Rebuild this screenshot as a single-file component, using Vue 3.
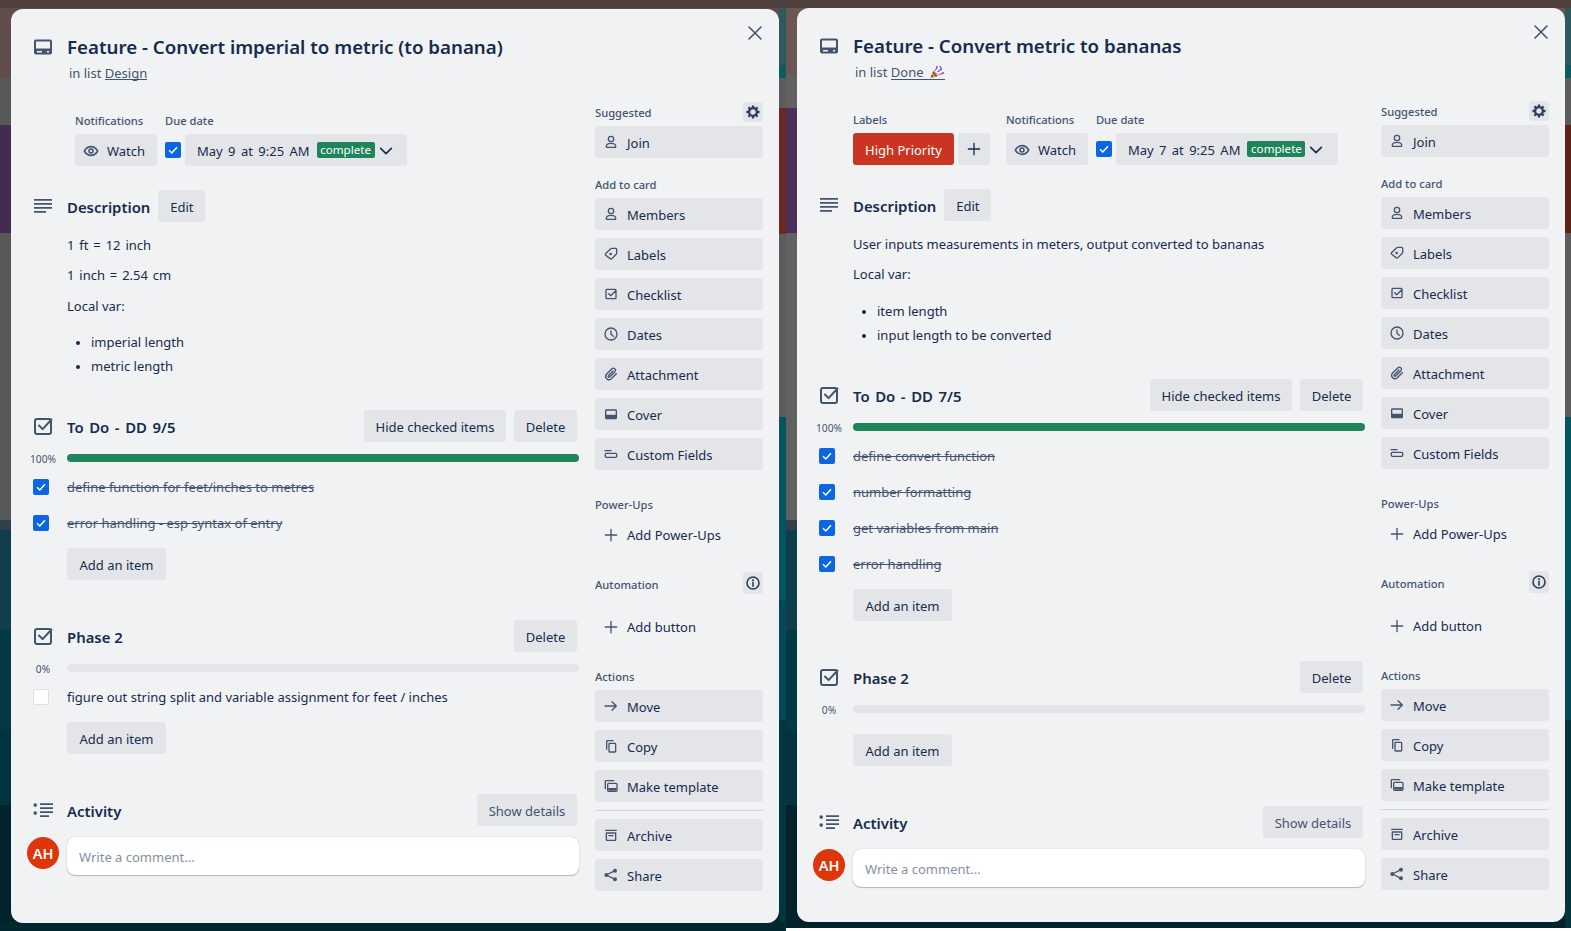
<template>
  <div class="page">
    <section v-for="card in cards" :key="card.title" class="modal" :class="card.cls">
      <button class="close"><Icon name="close" :size="16" /></button>
      <div class="main">
        <div class="row title-row">
          <div class="gutter"><Icon name="card" :size="24" class="head-icon" /></div>
          <h2 class="title">{{ card.title }}</h2>
        </div>
        <p class="in-list">
          in list
          <a class="list-link">{{ card.list }}<template v-if="card.party">&nbsp;<svg class="party" width="16" height="14" viewBox="0 0 16 14"><path d="M1 13.5 4.5 5l5.5 5.5Z" fill="#e8a820" /><path d="M2.5 10l1.5 2M4 7l3.5 4.5" stroke="#5a3fb0" stroke-width="1.3" /><circle cx="8" cy="2" r="1.1" fill="#e0389a" /><circle cx="12" cy="4" r="1.1" fill="#2f8fe0" /><circle cx="14" cy="8" r="1.1" fill="#e0389a" /><path d="M6 5.5 8 3M8.5 7l4-3M10 9.5l4-1M11 1l1 2" stroke="#7a48d0" stroke-width="1.1" fill="none" /></svg></template></a>
        </p>

        <div class="data">
          <div v-if="card.label" class="group">
            <h3 class="small-head">Labels</h3>
            <div class="group-line">
              <span class="label-chip">{{ card.label }}</span>
              <button class="btn square"><Icon name="plus" :size="16" /></button>
            </div>
          </div>
          <div class="group">
            <h3 class="small-head">Notifications</h3>
            <button class="btn watch"><Icon name="eye" :size="16" class="watch-icon" />Watch</button>
          </div>
          <div class="group due">
            <h3 class="small-head">Due date</h3>
            <div class="group-line">
              <span class="check on due-check"><Tick /></span>
              <button class="btn date">
                <span class="date-text">{{ card.due }}</span>
                <span class="complete">complete</span>
                <Icon name="chevron" :size="16" class="chev" />
              </button>
            </div>
          </div>
        </div>

        <div class="row desc-head">
          <div class="gutter"><Icon name="desc" :size="24" class="head-icon" /></div>
          <h3 class="section-title">Description</h3>
          <button class="btn edit">Edit</button>
        </div>
        <div class="desc">
          <p v-for="line in card.lines" :key="line" :class="{ sum: line.includes('=') }">{{ line }}</p>
          <ul>
            <li v-for="point in card.points" :key="point">{{ point }}</li>
          </ul>
        </div>

        <div v-for="(list, n) in card.checklists" :key="list.name" class="checklist" :class="{ lead: n === 0 }">
          <div class="row list-head">
            <div class="gutter"><Icon name="checklist" :size="24" class="head-icon" /></div>
            <h3 class="section-title grow">{{ list.name }}</h3>
            <button v-if="list.items.some(i => i.done)" class="btn hide">Hide checked items</button>
            <button class="btn delete">Delete</button>
          </div>
          <div class="row progress">
            <div class="gutter"><span class="pct">{{ progress(list) }}%</span></div>
            <div class="bar">
              <div class="bar-fill" :style="{ width: progress(list) + '%' }"></div>
            </div>
          </div>
          <div class="items">
            <div v-for="item in list.items" :key="item.text" class="row item">
              <div class="gutter">
                <span class="check item-check" :class="{ on: item.done }"><Tick v-if="item.done" /></span>
              </div>
              <span :class="{ struck: item.done }">{{ item.text }}</span>
            </div>
          </div>
          <button class="btn add-item">Add an item</button>
        </div>

        <div class="row activity-head">
          <div class="gutter"><Icon name="activity" :size="24" class="head-icon" /></div>
          <h3 class="section-title grow">Activity</h3>
          <button class="btn details">Show details</button>
        </div>
        <div class="row comment">
          <div class="gutter"><span class="avatar">AH</span></div>
          <div class="comment-box">Write a comment...</div>
        </div>
      </div>

      <aside class="side">
        <div v-for="sec in sections" :key="sec.title" class="side-sec" :class="sec.cls">
          <div class="side-head">
            <h3 class="small-head">{{ sec.title }}</h3>
            <button v-if="sec.tool" class="tool"><Icon :name="sec.tool" :size="16" /></button>
          </div>
          <div class="side-list">
            <template v-for="item in sec.items" :key="item.text">
              <hr v-if="item.rule" class="rule" />
              <button class="btn side-btn" :class="{ bare: sec.bare }">
                <Icon :name="item.icon" :size="16" class="side-icon" />{{ item.text }}
              </button>
            </template>
          </div>
        </div>
      </aside>
    </section>
  </div>
</template>

<script setup>
import { h } from 'vue'

const icons = {
  card: { fill: 'M5 4.5h14a2 2 0 0 1 2 2v11a2 2 0 0 1-2 2H5a2 2 0 0 1-2-2v-11a2 2 0 0 1 2-2Zm0 2v7h14v-7H5Zm1 9.500v1.600h5V16H6Zm10 0v1.600h2V16h-2Z' },
  desc: { fill: 'M3 5h18v1.800H3Zm0 4h18v1.800H3Zm0 4h18v1.800H3Zm0 4h12v1.800H3Z' },
  checklist: { line: 'M6 5h12a2 2 0 0 1 2 2v11a2 2 0 0 1-2 2H6a2 2 0 0 1-2-2V7a2 2 0 0 1 2-2Zm2 6.500 3.600 3.600L20.500 5.500' },
  activity: { fill: 'M4.200 5.300a1.800 1.800 0 1 1 0 3.600 1.800 1.800 0 0 1 0-3.600Zm0 8a1.800 1.800 0 1 1 0 3.600 1.800 1.800 0 0 1 0-3.600ZM9 5.200h13V7H9Zm0 4h13V11H9Zm0 4h13V15H9Zm0 4h9V19H9Z' },
  person: { line: 'M12 3.500a4 4 0 1 1 0 8 4 4 0 0 1 0-8ZM5 20v-1.500c0-2.500 2.500-4.500 7-4.500s7 2 7 4.500V20Z' },
  label: { line: 'M13 3.500h6a1.500 1.500 0 0 1 1.500 1.500v6a2 2 0 0 1-.6 1.400l-6.500 6.500a2 2 0 0 1-2.800 0L4.100 13.900a2 2 0 0 1 0-2.800l7.500-7a2 2 0 0 1 1.400-.6Z', fill: 'M11.500 10a2 2 0 1 1 0 4 2 2 0 0 1 0-4Z' },
  tick: { line: 'M6 5h12a1.500 1.500 0 0 1 1.500 1.500v11A1.500 1.500 0 0 1 18 19H6a1.500 1.500 0 0 1-1.500-1.500v-11A1.500 1.500 0 0 1 6 5Zm2.500 6.500 3 3L19 7' },
  clock: { line: 'M12 3a9 9 0 1 1 0 18 9 9 0 0 1 0-18Zm0 4.500V12.500l3.500 3' },
  clip: { line: 'M20 11.500l-8 8a5 5 0 0 1-7-7l8.500-8.500a3.200 3.200 0 0 1 4.500 4.500l-8 8a1.400 1.400 0 0 1-2-2l7-7' },
  cover: { fill: 'M5 5h14a2 2 0 0 1 2 2v11a2 2 0 0 1-2 2H5a2 2 0 0 1-2-2V7a2 2 0 0 1 2-2Zm0 2v6h14V7H5Z' },
  fields: { line: 'M3 7h9M5 11h14a1.500 1.500 0 0 1 1.500 1.500v3A1.500 1.500 0 0 1 19 17H5a1.500 1.500 0 0 1-1.500-1.500v-3A1.500 1.500 0 0 1 5 11Z' },
  plus: { line: 'M12 3.500v17M3.500 12h17' },
  arrow: { line: 'M3 12h17M13.500 5.500 20 12l-6.500 6.500' },
  copy: { line: 'M10 8h8a1 1 0 0 1 1 1v11a1 1 0 0 1-1 1h-8a1 1 0 0 1-1-1V9a1 1 0 0 1 1-1ZM5.500 17V5a1 1 0 0 1 1-1H15' },
  template: { line: 'M8.500 8h11a1.500 1.500 0 0 1 1.500 1.500v9a1.500 1.500 0 0 1-1.500 1.500h-11A1.500 1.500 0 0 1 7 18.500v-9A1.500 1.500 0 0 1 8.500 8ZM3.500 16V5a1 1 0 0 1 1-1H16', fill: 'M8 15h12v4H8Z' },
  archive: { line: 'M5 9h14v10a1 1 0 0 1-1 1H6a1 1 0 0 1-1-1ZM9 13h6M4 5h16' },
  share: { fill: 'M18 2.500a3 3 0 1 1 0 6 3 3 0 0 1 0-6ZM5 9a3 3 0 1 1 0 6 3 3 0 0 1 0-6Zm13 6.500a3 3 0 1 1 0 6 3 3 0 0 1 0-6Z', line: 'M18 5.500 5 12l13 6.500' },
  gear: { line: 'M12 6.200a5.800 5.800 0 1 1 0 11.600 5.800 5.800 0 0 1 0-11.600ZM12 2.200v3M12 18.800v3M2.200 12h3M18.800 12h3M5.100 5.100l2.100 2.100M16.800 16.800l2.100 2.100M5.100 18.900l2.100-2.100M16.800 7.200l2.100-2.100', width: 3.400, cap: 'butt' },
  info: { line: 'M12 3a9 9 0 1 1 0 18 9 9 0 0 1 0-18Zm0 8v6', fill: 'M10.700 6.500h2.600v2.600h-2.600Z', width: 2.400 },
  eye: { line: 'M2 12c2.500-4.500 6-6.500 10-6.500s7.500 2 10 6.500c-2.500 4.500-6 6.500-10 6.500S4.500 16.500 2 12Zm10-3a3 3 0 1 1 0 6 3 3 0 0 1 0-6Z', width: 2.400 },
  chevron: { line: 'M4 8l8 8 8-8', width: 2.400 },
  close: { line: 'M3 3l18 18M21 3 3 21', width: 2.400 },
}

const Icon = (props) => {
  const spec = icons[props.name]
  const parts = []
  if (spec.fill) parts.push(h('path', { d: spec.fill, fill: 'currentColor', 'fill-rule': 'evenodd' }))
  if (spec.line) {
    parts.push(h('path', {
      d: spec.line,
      fill: 'none',
      stroke: 'currentColor',
      'stroke-width': spec.width || 2,
      'stroke-linecap': spec.cap || 'round',
      'stroke-linejoin': 'round',
    }))
  }
  return h('svg', { width: props.size, height: props.size, viewBox: '0 0 24 24' }, parts)
}
Icon.props = ['name', 'size']

const Tick = () => h('svg', { width: 16, height: 16, viewBox: '0 0 16 16' }, [
  h('path', { d: 'M4 8.300 6.800 11 12 5.200', fill: 'none', stroke: '#fff', 'stroke-width': 1.500 }),
])

const cards = [
  {
    cls: 'first',
    title: 'Feature - Convert imperial to metric (to banana)',
    list: 'Design',
    due: 'May 9 at 9:25 AM',
    lines: ['1 ft = 12 inch', '1 inch = 2.54 cm', 'Local var:'],
    points: ['imperial length', 'metric length'],
    checklists: [
      {
        name: 'To Do - DD 9/5',
        items: [
          { text: 'define function for feet/inches to metres', done: true },
          { text: 'error handling - esp syntax of entry', done: true },
        ],
      },
      {
        name: 'Phase 2',
        items: [{ text: 'figure out string split and variable assignment for feet / inches', done: false }],
      },
    ],
  },
  {
    cls: 'second',
    title: 'Feature - Convert metric to bananas',
    list: 'Done',
    party: true,
    label: 'High Priority',
    due: 'May 7 at 9:25 AM',
    lines: ['User inputs measurements in meters, output converted to bananas', 'Local var:'],
    points: ['item length', 'input length to be converted'],
    checklists: [
      {
        name: 'To Do - DD 7/5',
        items: [
          { text: 'define convert function', done: true },
          { text: 'number formatting', done: true },
          { text: 'get variables from main', done: true },
          { text: 'error handling', done: true },
        ],
      },
      { name: 'Phase 2', items: [] },
    ],
  },
]

const sections = [
  { title: 'Suggested', cls: 'suggested', tool: 'gear', items: [{ text: 'Join', icon: 'person' }] },
  {
    title: 'Add to card',
    cls: 'add-card',
    items: [
      { text: 'Members', icon: 'person' },
      { text: 'Labels', icon: 'label' },
      { text: 'Checklist', icon: 'tick' },
      { text: 'Dates', icon: 'clock' },
      { text: 'Attachment', icon: 'clip' },
      { text: 'Cover', icon: 'cover' },
      { text: 'Custom Fields', icon: 'fields' },
    ],
  },
  { title: 'Power-Ups', cls: 'power', bare: true, items: [{ text: 'Add Power-Ups', icon: 'plus' }] },
  { title: 'Automation', cls: 'automation', bare: true, tool: 'info', items: [{ text: 'Add button', icon: 'plus' }] },
  {
    title: 'Actions',
    cls: 'actions',
    items: [
      { text: 'Move', icon: 'arrow' },
      { text: 'Copy', icon: 'copy' },
      { text: 'Make template', icon: 'template' },
      { text: 'Archive', icon: 'archive', rule: true },
      { text: 'Share', icon: 'share' },
    ],
  },
]

const progress = (list) => {
  if (!list.items.length) return 0
  return (list.items.filter((i) => i.done).length / list.items.length) * 100
}
</script>

<style>
html,
body {
  margin: 0;
  overflow: hidden;
}
</style>

<style scoped>
.page {
  width: 1571px;
  height: 931px;
  box-sizing: border-box;
  padding-left: 11px;
  display: flex;
  align-items: flex-start;
  gap: 18px;
  font-family: "Noto Sans", sans-serif;
  font-size: 13px;
  line-height: 20px;
  color: #172b4d;
  background-color: #02303a;
  background-repeat: no-repeat;
  background-image:
    linear-gradient(#fff, #fff),
    linear-gradient(#02282f, #02282f),
    linear-gradient(#50413f, #50413f),
    linear-gradient(#604d4a 78px, #585858 78px 125px, #452a52 125px 233px, #585858 233px 520px, #2f4048 520px 530px, #103f4b 530px 630px, #033845 630px 730px, #023440 730px 805px, #02222c 805px),
    linear-gradient(#2b5b5f 65px, #0d5a60 65px 78px, #5c5c5c 78px 108px, #6a2a22 108px 234px, #5c5c5c 234px 417px, #03565f 417px 600px, #03495a 600px 720px, #03353f 720px),
    linear-gradient(#6b5855 75px, #616161 75px 108px, #4e2f5c 108px 233px, #616161 233px 520px, #2f4048 520px 530px, #103f4b 530px 630px, #033845 630px 730px, #023440 730px 805px, #02222c 805px),
    linear-gradient(#2b5b5f 65px, #0d5a60 65px 78px, #5c5c5c 78px 125px, #5c231b 125px 233px, #5c5c5c 233px 417px, #03565f 417px 600px, #03495a 600px 720px, #03353f 720px);
  background-size:
    785px 3px,
    785px 9px,
    100% 8px,
    779px 100%,
    7px 100%,
    779px 100%,
    6px 100%;
  background-position:
    786px 100%,
    0 100%,
    0 0,
    0 0,
    779px 0,
    786px 0,
    1565px 0;
}

.modal {
  position: relative;
  flex: none;
  display: flex;
  width: 768px;
  height: 914px;
  border-radius: 12px;
  background: #f1f2f4;
}

.first {
  margin-top: 9px;
}

.second {
  margin-top: 8px;
}

.close {
  position: absolute;
  top: 16px;
  right: 16px;
  width: 16px;
  height: 16px;
  padding: 0;
  border: 0;
  background: none;
  color: #44546f;
}

.close svg {
  display: block;
}

.main {
  flex: none;
  width: 584px;
  box-sizing: border-box;
  padding: 26px 16px 0;
}

.side {
  flex: none;
  width: 168px;
  padding-top: 93px;
}

.row {
  display: flex;
  align-items: center;
}

.gutter {
  flex: none;
  display: flex;
  width: 40px;
}

.grow {
  flex: 1;
}

.head-icon {
  display: block;
  margin-left: 4px;
  color: #44546f;
}

.title {
  margin: 0;
  font-size: 18.7px;
  font-weight: 600;
  line-height: 24px;
}

.in-list {
  margin: 4px 0 0 42px;
  color: #44546f;
}

.list-link {
  display: inline-block;
  border-bottom: 1px solid currentColor;
  line-height: 12px;
}

.party {
  margin-left: 2px;
  vertical-align: -2px;
}

.data {
  display: flex;
  gap: 8px;
  margin-top: 30px;
  padding-left: 48px;
}

.second .data {
  padding-left: 40px;
}

.group-line {
  display: flex;
  align-items: center;
}

.second .group:first-child {
  margin-right: 8px;
}

.small-head {
  margin: 0 0 5px;
  font-size: 11.2px;
  font-weight: 500;
  line-height: 16px;
  color: #44546f;
}

.btn {
  box-sizing: border-box;
  display: block;
  height: 32px;
  padding: 1px 12px 0;
  border: 0;
  border-radius: 3px;
  background: rgba(9, 30, 66, 0.06);
  color: #172b4d;
  font: inherit;
  white-space: nowrap;
}

.label-chip {
  box-sizing: border-box;
  display: block;
  height: 32px;
  padding: 7px 12px 0;
  border-radius: 3px;
  background: #ca3521;
  color: #fff;
}

.square {
  width: 32px;
  margin-left: 4px;
  padding: 0 8px;
}

.square svg {
  display: block;
}

.watch {
  display: flex;
  align-items: center;
  width: 82px;
  padding: 1px 0 0 8px;
}

.watch-icon {
  margin-right: 8px;
  color: #44546f;
}

.date {
  display: flex;
  align-items: center;
  width: 222px;
  padding: 1px 0 0 12px;
}

.date-text {
  word-spacing: 2px;
}

.due-check {
  margin-right: 4px;
}

.check {
  box-sizing: border-box;
  display: block;
  flex: none;
  width: 16px;
  height: 16px;
  border-radius: 2px;
}

.check svg {
  display: block;
}

.check.on {
  background: #0c66e4;
}

.item-check {
  margin-left: 6px;
}

.item-check:not(.on) {
  background: #fff;
  border: 1px solid #dcdfe4;
}

.complete {
  width: 58px;
  height: 16px;
  margin: -1px 0 0 7px;
  border-radius: 2px;
  background: #1f845a;
  color: #fff;
  font-size: 11.6px;
  line-height: 16px;
  text-align: center;
}

.chev {
  margin-left: 3px;
}

.desc-head {
  margin-top: 24px;
}

.section-title {
  margin: 0;
  padding-top: 1px;
  font-size: 14.9px;
  font-weight: 600;
  line-height: 20px;
}

.lead .section-title {
  word-spacing: 1.7px;
}

.edit {
  width: 47px;
  margin-left: 8px;
  padding: 1px 0 0;
}

.desc {
  margin: 13px 0 0 40px;
}

.desc p {
  margin: 0 0 10px;
}

.desc p:nth-child(3) {
  margin-top: 11px;
}

.desc .sum {
  word-spacing: 1.5px;
}

.desc ul {
  margin: 16px 0 0;
  padding-left: 24px;
}

.second .desc ul {
  margin-top: 16.5px;
}

.desc li + li {
  margin-top: 4px;
}

.desc li::marker {
  font-size: 11px;
}

.checklist {
  margin-top: 34px;
}

.second .lead {
  margin-top: 34.5px;
}

.checklist + .checklist {
  margin-top: 40px;
}

.hide {
  width: 142px;
  margin-right: 8px;
  padding: 1px 0 0;
}

.delete {
  width: 63px;
  margin-right: 2px;
  padding: 1px 0 0;
}

.progress {
  margin-top: 12px;
}

.pct {
  width: 32px;
  height: 8px;
  font-size: 10.2px;
  line-height: 10px;
  text-align: center;
  color: #44546f;
}

.bar {
  flex: 1;
  height: 8px;
  border-radius: 4px;
  background: rgba(9, 30, 66, 0.06);
  overflow: hidden;
}

.bar-fill {
  height: 100%;
  background: #1f845a;
}

.items {
  min-height: 7px;
  margin-top: 7px;
}

.item {
  height: 36px;
}

.struck {
  color: #44546f;
  text-decoration: line-through;
}

.add-item {
  width: 99px;
  margin: 7px 0 0 40px;
  padding: 1px 0 0;
}

.activity-head {
  margin-top: 40px;
}

.details {
  width: 100px;
  margin-right: 2px;
  padding: 1px 0 0;
  color: #44546f;
}

.comment {
  align-items: flex-start;
  margin-top: 11px;
}

.avatar {
  width: 32px;
  height: 32px;
  border-radius: 50%;
  background: #de350b;
  color: #fff;
  font-size: 14.5px;
  font-weight: 600;
  line-height: 32px;
  text-align: center;
}

.comment-box {
  flex: 1;
  box-sizing: border-box;
  height: 38px;
  padding: 10px 12px 0;
  border-radius: 8px;
  background: #fff;
  box-shadow: 0 1px 1px rgba(9, 30, 66, 0.25), 0 0 1px rgba(9, 30, 66, 0.31);
  color: #8590a2;
}

.side-head {
  display: flex;
  align-items: center;
  justify-content: space-between;
  min-height: 16px;
}

.side-head .small-head {
  margin-bottom: 0;
}

.suggested .small-head {
  margin-top: 2px;
}

.automation .small-head {
  margin-top: 4px;
}

.tool {
  box-sizing: border-box;
  display: block;
  width: 20px;
  height: 20px;
  padding: 2px;
  border: 0;
  border-radius: 3px;
  background: rgba(9, 30, 66, 0.06);
  color: #2c3e5d;
}

.tool svg {
  display: block;
}

.side-list {
  display: flex;
  flex-direction: column;
  gap: 8px;
  margin-top: 5px;
}

.side-btn {
  display: flex;
  align-items: center;
  padding: 1px 0 0 8px;
  text-align: left;
}

.bare {
  padding-top: 0;
  background: none;
}

.side-icon {
  flex: none;
  margin: -1px 8px 0 0;
  color: #44546f;
}

.rule {
  width: 100%;
  height: 1px;
  margin: 0;
  border: 0;
  background: #d0d4db;
}

.suggested .side-list {
  margin-top: 4px;
}

.add-card {
  margin-top: 19px;
}

.power {
  margin-top: 27px;
}

.power .side-list {
  margin-top: 6px;
}

.automation {
  margin-top: 21px;
}

.automation .tool {
  height: 22px;
  padding: 3px 2px;
}

.automation .side-list {
  margin-top: 17px;
}

.actions {
  margin-top: 26px;
}
</style>
